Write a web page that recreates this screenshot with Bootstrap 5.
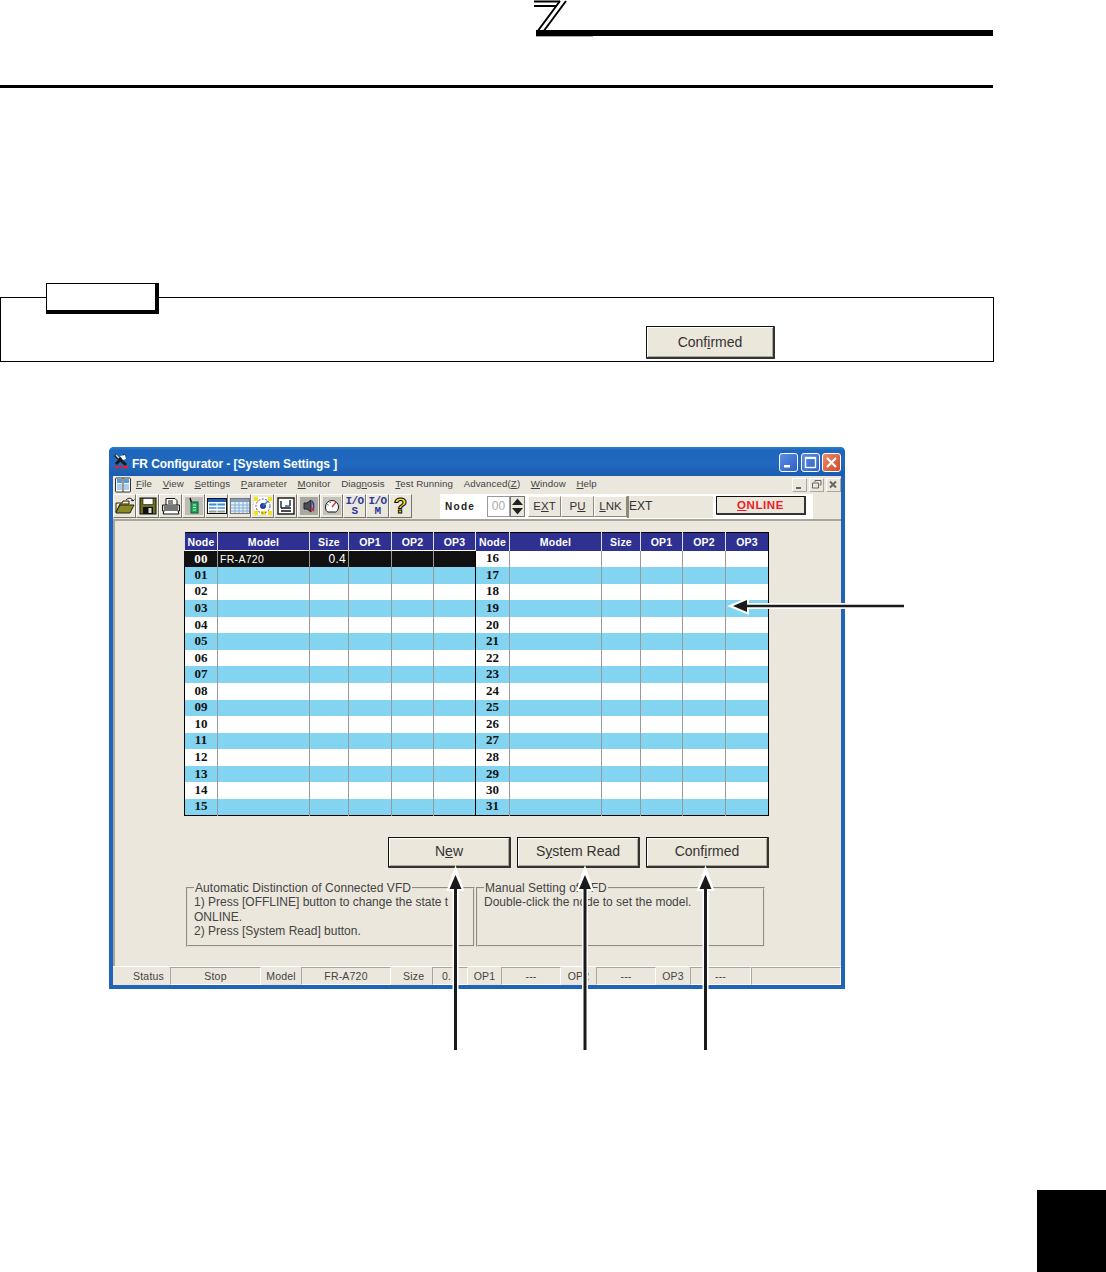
<!DOCTYPE html>
<html lang="en">
<head>
<meta charset="utf-8">
<title>FR Configurator - System Settings</title>
<link href="https://cdn.jsdelivr.net/npm/bootstrap@5.3.0/dist/css/bootstrap.min.css" rel="stylesheet">
<style>
html,body{margin:0;background:#fff;overflow:hidden}
body{font-family:"Liberation Sans",Arial,sans-serif;color:#333}
.sheet{position:relative;width:1106px;height:1272px;overflow:hidden;background:#fff}
.top-mark{margin-left:534px;width:459px;height:37px}
.top-mark svg{display:block}
.top-rule{height:3px;background:#000;width:993px;margin-top:48px}
.note-box{position:relative;width:994px;height:65px;margin-top:209px;border:1px solid #000;padding:28px 0 0 645px}
.note-tag{position:absolute;left:45px;top:-15px;width:113px;height:31px;background:#fff;border:1px solid #000;border-right-width:4px;border-bottom-width:4px}
.xp-btn{display:block;padding:0;border-radius:1px;background:#ebe7da;color:#333;border:1px solid #111;border-right:2px solid #333;border-bottom:2px solid #333;box-shadow:inset 1px 1px 0 #fff,inset -1px -1px 0 #aaa69a;font-size:14px;line-height:1}
.xp-btn:hover{background:#ebe7da;color:#333;border-color:#111}
.note-btn{width:129px;height:33px}
.app-win{width:736px;height:542px;margin:85px 0 0 109px;background:#1f64b8;border-radius:5px 5px 0 0;padding:0 4px 4px}
.title-row{height:29px;padding:6px 0 0 4px;background:linear-gradient(#2c7ed0 0,#1f66bd 12%,#2069bf 60%,#1b5cae 100%);margin:0 -4px;border-radius:5px 5px 0 0}
.title-txt{color:#fff;font-weight:700;font-size:12px;letter-spacing:-.06px;margin-left:3px;padding-top:2px;white-space:nowrap}
.cap-btn{width:19px;height:19px;border:1px solid #fff;border-radius:3px;background:linear-gradient(135deg,#5b8fe0,#2d5fc8);display:block;margin-left:2.5px}
.cap-btn.cap-x{background:linear-gradient(135deg,#ec8a66,#cf4a25)}
.cap-btn svg{display:block}
.menu-row{height:17px;background:#ebe7dc;font-size:9.7px;color:#444;letter-spacing:.1px;padding-left:2px}
.menu-row .mn-items{gap:10.6px;margin-left:5px}
.mdi-btn{width:15px;height:14px;background:#ebe7dc;border:1px solid;border-color:#fff #aaa69a #aaa69a #fff;margin-left:2px;display:block}
.mdi-btn svg{display:block}
.tool-row{height:26px;background:#ebe7dc}
.tbtn{width:23px;height:24px;margin-top:1px;background:#ebe7dc;border:1px solid;border-color:#fff #77746a #77746a #fff;display:flex;align-items:center;justify-content:center;padding:0;flex:none;overflow:hidden;border-radius:0}
.tbtn svg{display:block}
.io-lab{font-family:"Liberation Mono",monospace;font-weight:700;font-size:11px;line-height:10px;color:#2b3a9a;text-align:center;letter-spacing:-.6px}
.qmark{font-family:"Liberation Sans",sans-serif;font-weight:700;font-size:22px;line-height:22px;color:#f3e21a;-webkit-text-stroke:1px #000}
.tool-panel{margin-left:28px;width:373px;height:25px;margin-top:1px;background:#fff;padding-left:5px}
.node-lab{width:42px;font-weight:700;font-size:10px;letter-spacing:1.3px;color:#222}
.node-in{width:23px;height:21px;border:1px solid #999;background:#fff;color:#aaa;font-size:12px;line-height:19px;text-align:center}
.node-spin{width:15px;height:21px;background:#ebe7dc;border:1px solid #777}
.node-spin svg{display:block}
.mode-btn{height:21px;width:33px;background:#ebe7dc;border:1px solid;border-color:#fff #8b887d #8b887d #fff;font-size:11.5px;line-height:19px;text-align:center;color:#333}
.mode-first{margin-left:3px}
.mode-read{width:86px;height:22px;background:#ebe7dc;border-left:2px solid #8b887d;font-size:12px;line-height:20px;color:#333}
.online-btn{width:90px;height:19px;margin:0 0 3px 3px;background:#ebe7dc;border:1px solid #111;border-right:2px solid #333;border-bottom:2px solid #333;border-radius:1px;color:#ed1c24;font-weight:700;font-size:11.5px;line-height:16px;text-align:center;letter-spacing:.6px}
.client{height:447px;background:#ebe7dc;border-top:2px solid #a8a59a;border-left:2px solid #a8a59a;padding-top:11px}
.cfg-tbl{table-layout:fixed;border-collapse:collapse;width:585px;height:284px;margin-left:69px;border:1px solid #000;background:#fff}
.cfg-tbl th{background:#2e3192;color:#fff;font-size:10.5px;font-weight:700;text-align:center;padding:1px 0 0;height:18px;border-left:1px solid #dfe0ee;line-height:1;letter-spacing:.2px}
.cfg-tbl td{padding:0;border-left:1px solid #999;font-size:10.5px;line-height:1;color:#fff;height:16.5px}
.cfg-tbl tbody tr:nth-child(even) td{background:#82d4f0}
.cfg-tbl td.nd{font-family:"Liberation Serif",serif;font-weight:700;font-size:13px;text-align:center;color:#111;border-left:1px solid #000;padding-bottom:2px}
.cfg-tbl tbody tr td.on{background:#111;color:#fff;border-top:1px solid #fff;letter-spacing:.3px}
.cfg-tbl tbody tr td.nd.on{color:#fff;border-left-color:#111}
.cfg-tbl td.lft{padding-left:2px}
.cfg-tbl td.rgt{text-align:right;padding-right:2px;font-size:12px}
.act-row{width:585px;margin:21px 0 0 69px;gap:6px}
.act-btn{width:123px;height:31px;padding-bottom:2px}
.grp-row{margin:14px 0 0 71px;gap:1px}
.grp-box{width:289px;height:65px;border:2px groove #e2dfd4;margin:0;padding:0 0 0 6px;font-size:12px;line-height:14.5px;color:#444;min-width:0}
.grp-box legend{float:none;width:auto;font-size:12px;line-height:12px;margin:0 0 1px 0;padding:0 1px;letter-spacing:.05px}
.status-row{display:grid;grid-template-columns:57px 91px 40px 90px 41px 36px 33px 60px 35px 60px 34px 61px 1fr;height:19px;background:#ebe7dc;font-size:10.5px;color:#444;line-height:18px;text-align:center;letter-spacing:.2px;border-top:1px solid #fff}
.status-row .st-lab{white-space:nowrap}
.status-row .st-lab.st-one{text-align:right;padding-right:6px}
.status-row .st-lab.st-size{padding-left:12px;text-align:left}
.status-row .st-box{border:1px solid;border-color:#a8a59a #fff #fff #a8a59a;white-space:nowrap;line-height:16px}
.status-row .st-box.st-cut{text-align:left;padding-left:9px}
.edge-tab{width:69px;height:82px;background:#000;margin:201px 0 0 auto}
.overlay-arrows{position:absolute;left:0;top:0;pointer-events:none}
</style>
</head>
<body>
<div class="sheet">
  <div class="top-mark">
    <svg width="459" height="37" viewBox="0 0 459 37">
      <path d="M0 1.5H26M0 6H22" stroke="#000" stroke-width="2" fill="none"/>
      <path d="M26 1 3 32M32 1 9 32" stroke="#000" stroke-width="2" fill="none"/>
      <rect x="2" y="30" width="457" height="6" fill="#000"/>
      <rect x="2" y="36" width="57" height="1" fill="#aaa"/>
    </svg>
  </div>
  <div class="top-rule"></div>

  <div class="note-box">
    <div class="note-tag"></div>
    <button type="button" class="btn xp-btn note-btn">Conf<u>i</u>rmed</button>
  </div>

  <div class="app-win">
    <div class="title-row d-flex">
      <svg width="16" height="16" viewBox="0 0 16 16" class="flex-none">
        <path d="M2 2 13 12M12 2 3 11" stroke="#1b1b1b" stroke-width="3"/>
        <path d="M7 3l5-1 1 4-3 1z" fill="#fff"/>
        <path d="M3 2l3 3" stroke="#ddd" stroke-width="1.5"/>
        <path d="M2 14h4M7 14h3M11 14h4" stroke="#e0222a" stroke-width="2.4"/>
      </svg>
      <span class="title-txt flex-grow-1">FR Configurator - [System Settings ]</span>
      <span class="cap-btn"><svg width="17" height="17" viewBox="0 0 17 17"><rect x="4" y="11" width="6" height="2.5" fill="#fff"/></svg></span>
      <span class="cap-btn"><svg width="17" height="17" viewBox="0 0 17 17"><rect x="3.5" y="3.5" width="10" height="10" fill="none" stroke="#fff" stroke-width="1.4"/><rect x="3" y="3" width="11" height="2" fill="#fff"/></svg></span>
      <span class="cap-btn cap-x me-1"><svg width="17" height="17" viewBox="0 0 17 17"><path d="M4 4l9 9M13 4l-9 9" stroke="#fff" stroke-width="2.2"/></svg></span>
    </div>

    <div class="menu-row d-flex align-items-center">
      <svg width="16" height="16" viewBox="0 0 16 16" class="flex-none">
        <rect x=".5" y="1" width="15" height="14" rx="1" fill="#fff" stroke="#333"/>
        <rect x="2" y="2" width="5" height="4" fill="#5a9ad8"/><rect x="9" y="2" width="5" height="4" fill="#5a9ad8"/>
        <path d="M2 8h5M2 10h5M2 12h5M9 8h5M9 10h5M9 12h5" stroke="#5a9ad8"/>
        <path d="M8 1v14" stroke="#333"/>
      </svg>
      <div class="mn-items d-flex flex-grow-1">
        <span><u>F</u>ile</span><span><u>V</u>iew</span><span><u>S</u>ettings</span><span><u>P</u>arameter</span><span><u>M</u>onitor</span><span>Diag<u>n</u>osis</span><span><u>T</u>est Running</span><span>Advanced(<u>Z</u>)</span><span><u>W</u>indow</span><span><u>H</u>elp</span>
      </div>
      <span class="mdi-btn"><svg width="13" height="12" viewBox="0 0 13 12"><rect x="3" y="8" width="5" height="2" fill="#666"/></svg></span>
      <span class="mdi-btn"><svg width="13" height="12" viewBox="0 0 13 12"><path d="M5 3V1.500h6V6H9.500M2.500 4h6v5h-6z" fill="none" stroke="#666"/></svg></span>
      <span class="mdi-btn"><svg width="13" height="12" viewBox="0 0 13 12"><path d="M3 2.500l6 6M9 2.500l-6 6" stroke="#666" stroke-width="2"/></svg></span>
    </div>

    <div class="tool-row d-flex">
      <div class="tbtn"><svg width="20" height="18" viewBox="0 0 20 18"><path d="M1 6h6l1-2h6v3H5l-4 8z" fill="#fff2a0" stroke="#222"/><path d="M1 15 5 8h14l-4 8H1z" fill="#8a8a22" stroke="#222"/><path d="M11 3C13 .5 17 .5 18 4M18 4l1.500-1.500M18 4l-2-1" fill="none" stroke="#222"/></svg></div>
      <div class="tbtn"><svg width="18" height="18" viewBox="0 0 18 18"><rect x="1" y="1" width="16" height="16" fill="#6e7018" stroke="#111"/><rect x="4" y="1.500" width="10" height="6" fill="#fff" stroke="#111" stroke-width=".6"/><rect x="4" y="10" width="10" height="7" fill="#111"/><rect x="9.500" y="11" width="3" height="5" fill="#ddd"/></svg></div>
      <div class="tbtn"><svg width="20" height="18" viewBox="0 0 20 18"><path d="M5 8V1.500h9l2 2V8" fill="#fff" stroke="#111"/><path d="M1.500 8h17v6h-17z" fill="#ddd" stroke="#111"/><path d="M3 14l-1 3h16l-1-3" fill="#fff" stroke="#111"/><path d="M3 10h14M3 12h14M7 4h5M7 6h5" stroke="#111"/></svg></div>
      <div class="tbtn"><svg width="20" height="20" viewBox="0 0 20 20"><rect x="1" y="1" width="18" height="18" fill="#bdbcb6"/><path d="M6 2l2 6" stroke="#111" stroke-width="1.500"/><rect x="7" y="6" width="7" height="11" fill="#1fa85a" stroke="#0c5a2a"/><path d="M9 9h3M9 11.500h3M9 14h3" stroke="#bff0cf"/></svg></div>
      <div class="tbtn"><svg width="20" height="18" viewBox="0 0 20 18"><rect x=".5" y="1.500" width="19" height="15" fill="#fff" stroke="#111"/><rect x="1" y="2" width="18" height="3" fill="#1d5fb8"/><rect x="2" y="6.500" width="16" height="2" fill="#3c8ed8"/><rect x="2" y="10" width="16" height="2" fill="#6cb2e6"/><rect x="2" y="13.500" width="16" height="2" fill="#9a9a9a"/><path d="M10 5v11" stroke="#fff"/></svg></div>
      <div class="tbtn"><svg width="20" height="18" viewBox="0 0 20 18"><rect x=".5" y="1.500" width="19" height="15" fill="#e8eef4" stroke="#777"/><rect x="1" y="2" width="18" height="3" fill="#7f9fb8"/><path d="M1 8h18M1 11h18M1 14h18M5 5v11M9 5v11M13 5v11M17 5v11" stroke="#7fb0d8"/></svg></div>
      <div class="tbtn"><svg width="20" height="20" viewBox="0 0 20 20"><rect x="1" y="1" width="18" height="18" fill="#fff"/><path d="M1 1h4v4H1zM15 1h4v4h-4zM1 15h4v4H1zM8 15h5v4H8zM15 15h4v4h-4z" fill="#f3e21a"/><circle cx="10" cy="10" r="7" fill="none" stroke="#555" stroke-dasharray="2 1.500"/><circle cx="10" cy="10" r="3" fill="#2b3a9a"/><path d="M10 10l5-5" stroke="#2b7fd0" stroke-width="1.500"/></svg></div>
      <div class="tbtn"><svg width="18" height="18" viewBox="0 0 18 18"><rect x="1" y="1" width="16" height="16" fill="#fff" stroke="#111" stroke-width="1.400"/><path d="M4 4v7M4 11h10M4 14h10M13 3v6" stroke="#111" stroke-width="1.300"/><path d="M8 9h5" stroke="#2b5fb0" stroke-width="1.500"/></svg></div>
      <div class="tbtn"><svg width="20" height="20" viewBox="0 0 20 20"><rect x="1" y="1" width="18" height="18" fill="#a9a8a3"/><path d="M5 7h3l4-3v12l-4-3H5z" fill="#4a4a58" stroke="#222"/><path d="M13 5c2 2 2 7 1 9" fill="none" stroke="#2b3a9a" stroke-width="1.500"/><path d="M12 12l3 3" stroke="#d92a2a" stroke-width="1.800"/></svg></div>
      <div class="tbtn"><svg width="20" height="20" viewBox="0 0 20 20"><rect x="1" y="1" width="18" height="18" fill="#c3c2bc"/><path d="M3.500 11a6.500 6.500 0 1 1 13 0c0 3-2 5-3 5H6c-1 0-2.500-2-2.500-5z" fill="#fff" stroke="#111"/><path d="M10 11l4-5" stroke="#d92a2a" stroke-width="1.300"/><path d="M5.500 8.500l1 .6M8 6l.4 1" stroke="#333"/></svg></div>
      <div class="tbtn"><div class="io-lab">I/O<br>S</div></div>
      <div class="tbtn"><div class="io-lab">I/O<br>M</div></div>
      <div class="tbtn"><span class="qmark">?</span></div>

      <div class="tool-panel d-flex align-items-center">
        <span class="node-lab">Node</span>
        <span class="node-in">00</span>
        <span class="node-spin"><svg width="13" height="19" viewBox="0 0 13 19"><path d="M6.500 1.500 12 8H1zM6.500 17.500 12 11H1z" fill="#222"/></svg></span>
        <span class="mode-btn mode-first">E<u>X</u>T</span>
        <span class="mode-btn">P<u>U</u></span>
        <span class="mode-btn"><u>L</u>NK</span>
        <span class="mode-read">EXT</span>
        <span class="online-btn"><u>O</u>NLINE</span>
      </div>
    </div>

    <div class="client">
      <table class="cfg-tbl">
        <colgroup><col style="width:33px"><col style="width:92px"><col style="width:39px"><col style="width:43px"><col style="width:42px"><col style="width:42px"><col style="width:34px"><col style="width:92px"><col style="width:39px"><col style="width:42px"><col style="width:43px"><col></colgroup>
        <thead><tr><th>Node</th><th>Model</th><th>Size</th><th>OP1</th><th>OP2</th><th>OP3</th><th>Node</th><th>Model</th><th>Size</th><th>OP1</th><th>OP2</th><th>OP3</th></tr></thead>
        <tbody>
          <tr><td class="nd on">00</td><td class="lft on">FR-A720</td><td class="rgt on">0.4</td><td class="on"></td><td class="on"></td><td class="on"></td><td class="nd">16</td><td></td><td></td><td></td><td></td><td></td></tr>
          <tr><td class="nd">01</td><td></td><td></td><td></td><td></td><td></td><td class="nd">17</td><td></td><td></td><td></td><td></td><td></td></tr>
          <tr><td class="nd">02</td><td></td><td></td><td></td><td></td><td></td><td class="nd">18</td><td></td><td></td><td></td><td></td><td></td></tr>
          <tr><td class="nd">03</td><td></td><td></td><td></td><td></td><td></td><td class="nd">19</td><td></td><td></td><td></td><td></td><td></td></tr>
          <tr><td class="nd">04</td><td></td><td></td><td></td><td></td><td></td><td class="nd">20</td><td></td><td></td><td></td><td></td><td></td></tr>
          <tr><td class="nd">05</td><td></td><td></td><td></td><td></td><td></td><td class="nd">21</td><td></td><td></td><td></td><td></td><td></td></tr>
          <tr><td class="nd">06</td><td></td><td></td><td></td><td></td><td></td><td class="nd">22</td><td></td><td></td><td></td><td></td><td></td></tr>
          <tr><td class="nd">07</td><td></td><td></td><td></td><td></td><td></td><td class="nd">23</td><td></td><td></td><td></td><td></td><td></td></tr>
          <tr><td class="nd">08</td><td></td><td></td><td></td><td></td><td></td><td class="nd">24</td><td></td><td></td><td></td><td></td><td></td></tr>
          <tr><td class="nd">09</td><td></td><td></td><td></td><td></td><td></td><td class="nd">25</td><td></td><td></td><td></td><td></td><td></td></tr>
          <tr><td class="nd">10</td><td></td><td></td><td></td><td></td><td></td><td class="nd">26</td><td></td><td></td><td></td><td></td><td></td></tr>
          <tr><td class="nd">11</td><td></td><td></td><td></td><td></td><td></td><td class="nd">27</td><td></td><td></td><td></td><td></td><td></td></tr>
          <tr><td class="nd">12</td><td></td><td></td><td></td><td></td><td></td><td class="nd">28</td><td></td><td></td><td></td><td></td><td></td></tr>
          <tr><td class="nd">13</td><td></td><td></td><td></td><td></td><td></td><td class="nd">29</td><td></td><td></td><td></td><td></td><td></td></tr>
          <tr><td class="nd">14</td><td></td><td></td><td></td><td></td><td></td><td class="nd">30</td><td></td><td></td><td></td><td></td><td></td></tr>
          <tr><td class="nd">15</td><td></td><td></td><td></td><td></td><td></td><td class="nd">31</td><td></td><td></td><td></td><td></td><td></td></tr>
        </tbody>
      </table>

      <div class="act-row d-flex justify-content-end">
        <button type="button" class="btn xp-btn act-btn">N<u>e</u>w</button>
        <button type="button" class="btn xp-btn act-btn">S<u>y</u>stem Read</button>
        <button type="button" class="btn xp-btn act-btn">Conf<u>i</u>rmed</button>
      </div>

      <div class="grp-row d-flex">
        <fieldset class="grp-box">
          <legend>Automatic Distinction of Connected VFD</legend>
          1) Press [OFFLINE] button to change the state t<br>ONLINE.<br>2) Press [System Read] button.
        </fieldset>
        <fieldset class="grp-box">
          <legend>Manual Setting of VFD</legend>
          Double-click the node to set the model.
        </fieldset>
      </div>
    </div>

    <div class="status-row">
      <div class="st-lab st-one">Status</div><div class="st-box">Stop</div>
      <div class="st-lab">Model</div><div class="st-box">FR-A720</div>
      <div class="st-lab st-size">Size</div><div class="st-box st-cut">0.</div>
      <div class="st-lab">OP1</div><div class="st-box">---</div>
      <div class="st-lab">OP2</div><div class="st-box">---</div>
      <div class="st-lab">OP3</div><div class="st-box">---</div>
      <div class="st-box"></div>
    </div>
  </div>

  <div class="edge-tab"></div>

  <svg class="overlay-arrows" width="1106" height="1272" viewBox="0 0 1106 1272">
    <path d="M890 606H745M455.500 1050V885M585 1050V885M705.500 1050V885" fill="none" stroke="#fff" stroke-width="6"/>
    <g fill="#fff">
      <path d="M727 606 749 597V615z"/>
      <path d="M455.500 865 446.500 891H464.500z"/>
      <path d="M585 865 576 891H594z"/>
      <path d="M705.500 865 696.500 891H714.500z"/>
    </g>
    <g fill="#1a1a1a">
      <path d="M733 606 747 600V612z"/>
      <path d="M455.500 875 449.500 889H461.500z"/>
      <path d="M585 875 579 889H591z"/>
      <path d="M705.500 875 699.500 889H711.500z"/>
    </g>
    <path d="M904 606H745" fill="none" stroke="#1a1a1a" stroke-width="2.600"/>
    <path d="M455.500 1050V888M585 1050V888M705.500 1050V888" fill="none" stroke="#1a1a1a" stroke-width="3"/>
  </svg>
</div>
</body>
</html>
